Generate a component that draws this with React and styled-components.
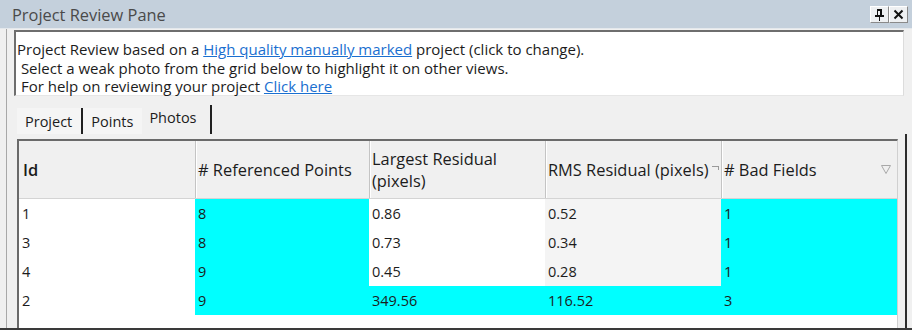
import React from "react";
import styled, { createGlobalStyle } from "styled-components";

const GlobalStyle = createGlobalStyle`
  html, body {
    margin: 0;
    padding: 0;
    background: #f0f0f0;
  }
  body {
    font-family: "Open Sans", "Noto Sans", sans-serif;
    color: #1c1c1c;
  }
`;

const Pane = styled.div`
  position: relative;
  display: flex;
  flex-direction: column;
  width: 912px;
  height: 330px;
  box-sizing: border-box;
  border-bottom: 2px solid #3a3a3a;
  background: #f0f0f0;
  overflow: hidden;
`;

const TitleBar = styled.div`
  display: flex;
  align-items: center;
  justify-content: space-between;
  height: 29px;
  flex: 0 0 29px;
  padding: 0 4px 0 12px;
  box-sizing: border-box;
  background: #c4d0dc;
  border-bottom: 1px solid #e4e8ec;
  font-size: 16.4px;
  color: #4a4a4a;
`;

const TitleButtons = styled.div`
  display: flex;
  align-self: flex-start;
  margin-top: 6px;
`;

const TitleButton = styled.div`
  display: flex;
  align-items: center;
  justify-content: center;
  width: 19px;
  height: 17px;
  box-sizing: border-box;
  background: #eef0f2;
  border: 1px solid #ffffff;
  border-right-color: #8a8a8a;
  border-bottom-color: #8a8a8a;
`;

const Body = styled.div`
  flex: 1 1 auto;
  display: flex;
  flex-direction: column;
  margin-left: 6px;
  border-left: 1px solid #a8a8a8;
  padding: 1px 5px 0 7px;
  min-height: 0;
`;

const InfoBox = styled.div`
  height: 66px;
  box-sizing: border-box;
  margin-right: 3px;
  background: #ffffff;
  border-top: 2px solid #6e6e6e;
  border-left: 2px solid #6e6e6e;
  border-right: 1px solid #dcdcdc;
  border-bottom: 1px solid #e6e6e6;
  padding: 8px 0 0 1px;
  font-size: 15px;
  line-height: 18.5px;
  color: #1c1c1c;
`;

const InfoLine = styled.div`
  white-space: pre;
`;

const Link = styled.a`
  color: #1a6fd0;
  text-decoration: underline;
  cursor: pointer;
`;

const TabStrip = styled.div`
  display: flex;
  align-items: flex-end;
  height: 38px;
  flex: 0 0 38px;
  padding-left: 3px;
  box-sizing: border-box;
`;

const Tab = styled.div`
  display: flex;
  align-items: center;
  height: ${(p) => (p.$active ? "29px" : "26px")};
  padding: ${(p) => (p.$active ? "0 13px 4px 7px" : "0 9px 0 8px")};
  box-sizing: border-box;
  background: ${(p) => (p.$active ? "#f0f0f0" : "#f5f5f5")};
  border-right: ${(p) => (p.$edge ? "2px solid #202020" : "none")};
  font-size: 14.5px;
  color: #1c1c1c;
`;

const TabPage = styled.div`
  flex: 1 1 auto;
  display: flex;
  padding: 5px 7px 0 3px;
  border-right: 2px solid #2c2c2c;
  min-height: 0;
`;

const Grid = styled.div`
  flex: 1 1 auto;
  display: flex;
  flex-direction: column;
  background: #ffffff;
  border-top: 2px solid #6a6a6a;
  border-left: 2px solid #6a6a6a;
  border-right: 1px solid #d0d0d0;
`;

const Row = styled.div`
  display: grid;
  grid-template-columns: 176px 174px 176px 176px 176px;
  height: ${(p) => (p.$header ? "57px" : "29px")};
  flex: 0 0 auto;
`;

const HeaderRow = styled(Row)`
  background: #f0f0f0;
  border-bottom: 1px solid #d4d4d4;
`;

const HeaderCell = styled.div`
  position: relative;
  display: flex;
  align-items: center;
  padding-left: ${(p) => (p.$first ? "4px" : "2px")};
  border-left: ${(p) => (p.$first ? "none" : "1px solid #c4c4c4")};
  box-shadow: ${(p) => (p.$first ? "none" : "inset 1px 0 0 #ffffff")};
  font-size: 16.4px;
  line-height: 22px;
  font-weight: ${(p) => (p.$strong ? 600 : 400)};
  color: #1c1c1c;
`;

const HeaderLabel = styled.span`
  white-space: pre;
`;

const Cell = styled.div`
  display: flex;
  align-items: center;
  padding-left: 3px;
  background: ${(p) =>
    p.$tone === "cyan" ? "#00ffff" : p.$tone === "grey" ? "#f4f4f4" : "#ffffff"};
  font-size: 14.5px;
  color: #1c1c1c;
`;

const SortMark = styled.svg`
  position: absolute;
  right: 6px;
  top: 24px;
`;

const ResizeMark = styled.svg`
  position: absolute;
  right: 1px;
  top: 25px;
`;

const PinIcon = () => (
  <svg width="11" height="12" viewBox="0 0 11 12">
    <path
      d="M3 1h5M3.5 1v6M6.5 1v6M7.5 1v6M1 7h9M5.5 7v5"
      stroke="#111"
      strokeWidth="1.2"
      fill="none"
      shapeRendering="crispEdges"
    />
  </svg>
);

const CloseIcon = () => (
  <svg width="11" height="11" viewBox="0 0 11 11">
    <path d="M1.5 1.5l8 8M9.5 1.5l-8 8" stroke="#111" strokeWidth="2" fill="none" />
  </svg>
);

const columns = [
  { label: "Id", strong: true },
  { label: "# Referenced Points" },
  { label: "Largest Residual\n(pixels)" },
  { label: "RMS Residual (pixels)", resize: true },
  { label: "# Bad Fields", sort: true },
];

const rows = [
  { id: "1", refs: "8", largest: "0.86", rms: "0.52", bad: "1", alert: false },
  { id: "3", refs: "8", largest: "0.73", rms: "0.34", bad: "1", alert: false },
  { id: "4", refs: "9", largest: "0.45", rms: "0.28", bad: "1", alert: false },
  { id: "2", refs: "9", largest: "349.56", rms: "116.52", bad: "3", alert: true },
];

export default function App() {
  return (
    <>
      <GlobalStyle />
      <Pane>
        <TitleBar>
          <span>Project Review Pane</span>
          <TitleButtons>
            <TitleButton>
              <PinIcon />
            </TitleButton>
            <TitleButton>
              <CloseIcon />
            </TitleButton>
          </TitleButtons>
        </TitleBar>
        <Body>
          <InfoBox>
            <InfoLine>
              Project Review based on a <Link>High quality manually marked</Link> project
              (click to change).
            </InfoLine>
            <InfoLine> Select a weak photo from the grid below to highlight it on other views.</InfoLine>
            <InfoLine>
              {" "}For help on reviewing your project <Link>Click here</Link>
            </InfoLine>
          </InfoBox>
          <TabStrip>
            <Tab $edge>Project</Tab>
            <Tab>Points</Tab>
            <Tab $active $edge>
              Photos
            </Tab>
          </TabStrip>
          <TabPage>
            <Grid>
              <HeaderRow $header>
                {columns.map((c, i) => (
                  <HeaderCell key={c.label} $first={i === 0} $strong={c.strong}>
                    <HeaderLabel>{c.label}</HeaderLabel>
                    {c.resize && (
                      <ResizeMark width="8" height="4" viewBox="0 0 8 4">
                        <path d="M0 0.5h7M6.5 0v4" stroke="#9a9a9a" strokeWidth="1" />
                      </ResizeMark>
                    )}
                    {c.sort && (
                      <SortMark width="10" height="9" viewBox="0 0 10 9">
                        <path d="M0.5 0.5h9L5 8.5z" fill="none" stroke="#a8a8a8" strokeWidth="1" />
                      </SortMark>
                    )}
                  </HeaderCell>
                ))}
              </HeaderRow>
              {rows.map((r) => (
                <Row key={r.id}>
                  <Cell>{r.id}</Cell>
                  <Cell $tone="cyan">{r.refs}</Cell>
                  <Cell $tone={r.alert ? "cyan" : "white"}>{r.largest}</Cell>
                  <Cell $tone={r.alert ? "cyan" : "grey"}>{r.rms}</Cell>
                  <Cell $tone="cyan">{r.bad}</Cell>
                </Row>
              ))}
            </Grid>
          </TabPage>
        </Body>
      </Pane>
    </>
  );
}
